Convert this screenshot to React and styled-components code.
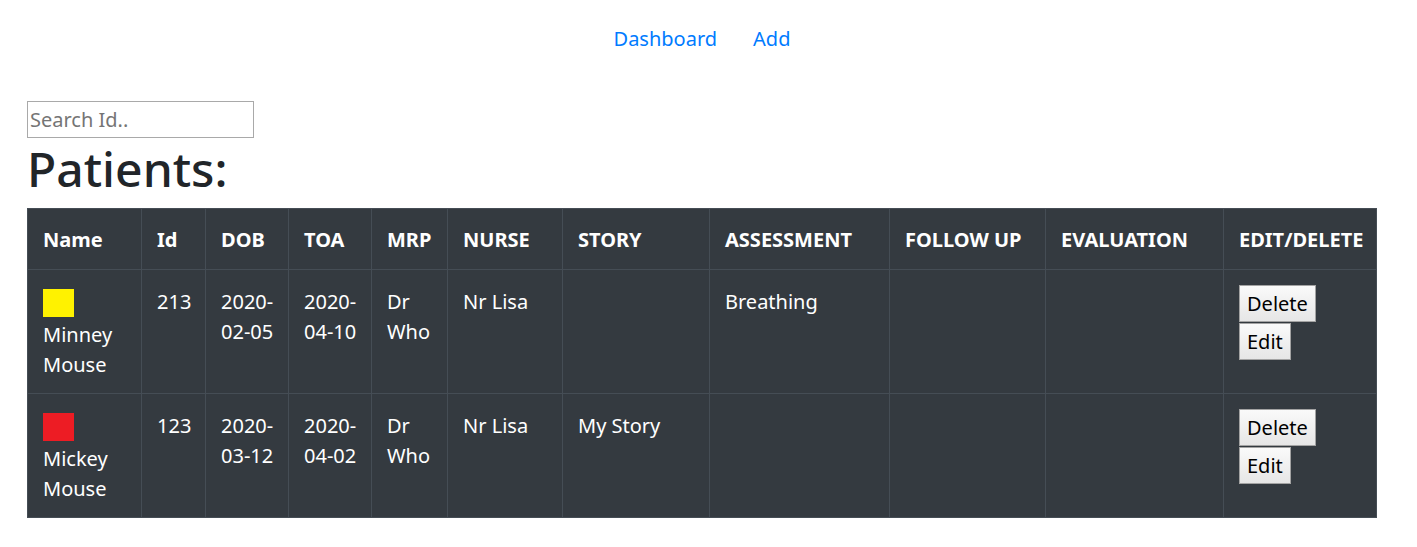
import React from "react";
import styled, { createGlobalStyle } from "styled-components";

const GlobalStyle = createGlobalStyle`
  body {
    margin: 0;
    background: #fff;
    font-family: "Segoe UI", "Noto Sans", "Open Sans", sans-serif;
    font-size: 20px;
    line-height: 30px;
    color: #212529;
  }
`;

const Page = styled.div`
  padding: 0 40px 0 27px;
`;

const Nav = styled.nav`
  display: flex;
  justify-content: center;
  gap: 36px;
  padding: 24px 0 0;
  height: 30px;
  margin-bottom: 47px;
`;

const NavLink = styled.a`
  color: #007bff;
  text-decoration: none;
  font-size: 20px;
  line-height: 30px;
`;

const Search = styled.input`
  display: block;
  box-sizing: border-box;
  width: 227px;
  height: 37px;
  margin: 0;
  padding: 0 2px;
  border: 1px solid #a9a9a9;
  font-family: inherit;
  font-size: 20px;
  color: #212529;
  outline: none;
  &::placeholder {
    color: #757575;
  }
`;

const Heading = styled.h1`
  margin: 0 0 10px;
  font-size: 48px;
  font-weight: 500;
  line-height: 60px;
  color: #212529;
  padding-top: 1px;
  height: 59px;
`;

const Table = styled.table`
  width: 1349px;
  table-layout: fixed;
  border-collapse: collapse;
  background: #343a40;
  color: #fff;
`;

const Th = styled.th`
  width: ${(p) => p.$w}px;
  box-sizing: border-box;
  padding: 16px 15px 14px;
  border: 1px solid #454d55;
  text-align: left;
  vertical-align: bottom;
  font-weight: 700;
  white-space: nowrap;
  overflow: hidden;
`;

const Td = styled.td`
  padding: 17px 15px 13px;
  border: 1px solid #454d55;
  vertical-align: top;
  text-align: left;
`;

const Part = styled.span`
  white-space: nowrap;
`;

const Swatch = styled.div`
  width: 31px;
  height: 28px;
  margin: 2px 0 3px;
  background: ${(p) => p.$color};
`;

const Btn = styled.button`
  display: block;
  box-sizing: border-box;
  height: 37px;
  margin: 0 0 1px;
  padding: 0 7px;
  border: 1px solid #a3a3a3;
  border-radius: 0;
  background: linear-gradient(#fafafa, #e6e6e6);
  font-family: inherit;
  font-size: 20px;
  line-height: 35px;
  color: #000;
  cursor: pointer;
`;

const BtnGroup = styled.div`
  margin-top: -2px;
`;

const columns = [
  ["Name", 114],
  ["Id", 64],
  ["DOB", 83],
  ["TOA", 83],
  ["MRP", 76],
  ["NURSE", 115],
  ["STORY", 147],
  ["ASSESSMENT", 180],
  ["FOLLOW UP", 156],
  ["EVALUATION", 178],
  ["EDIT/DELETE", 153],
];

const patients = [
  {
    color: "#fff200",
    name: "Minney Mouse",
    id: 213,
    dob: "2020-02-05",
    toa: "2020-04-10",
    mrp: "Dr Who",
    nurse: "Nr Lisa",
    story: "",
    assessment: "Breathing",
    followUp: "",
    evaluation: "",
  },
  {
    color: "#ed1c24",
    name: "Mickey Mouse",
    id: 123,
    dob: "2020-03-12",
    toa: "2020-04-02",
    mrp: "Dr Who",
    nurse: "Nr Lisa",
    story: "My Story",
    assessment: "",
    followUp: "",
    evaluation: "",
  },
];

const DateText = ({ value }) => {
  const year = value.slice(0, 5);
  const rest = value.slice(5);
  return (
    <>
      <Part>{year}</Part>
      <wbr />
      <Part>{rest}</Part>
    </>
  );
};

const App = () => {
  return (
    <Page>
      <GlobalStyle />
      <Nav>
        <NavLink href="#">Dashboard</NavLink>
        <NavLink href="#">Add</NavLink>
      </Nav>
      <Search placeholder="Search Id.." />
      <Heading>Patients:</Heading>
      <Table>
        <thead>
          <tr>
            {columns.map(([label, w]) => (
              <Th key={label} $w={w}>
                {label}
              </Th>
            ))}
          </tr>
        </thead>
        <tbody>
          {patients.map((p) => (
            <tr key={p.id}>
              <Td>
                <Swatch $color={p.color} />
                {p.name}
              </Td>
              <Td>{p.id}</Td>
              <Td>
                <DateText value={p.dob} />
              </Td>
              <Td>
                <DateText value={p.toa} />
              </Td>
              <Td>{p.mrp}</Td>
              <Td>{p.nurse}</Td>
              <Td>{p.story}</Td>
              <Td>{p.assessment}</Td>
              <Td>{p.followUp}</Td>
              <Td>{p.evaluation}</Td>
              <Td>
                <BtnGroup>
                  <Btn>Delete</Btn>
                  <Btn>Edit</Btn>
                </BtnGroup>
              </Td>
            </tr>
          ))}
        </tbody>
      </Table>
    </Page>
  );
};

export default App;
